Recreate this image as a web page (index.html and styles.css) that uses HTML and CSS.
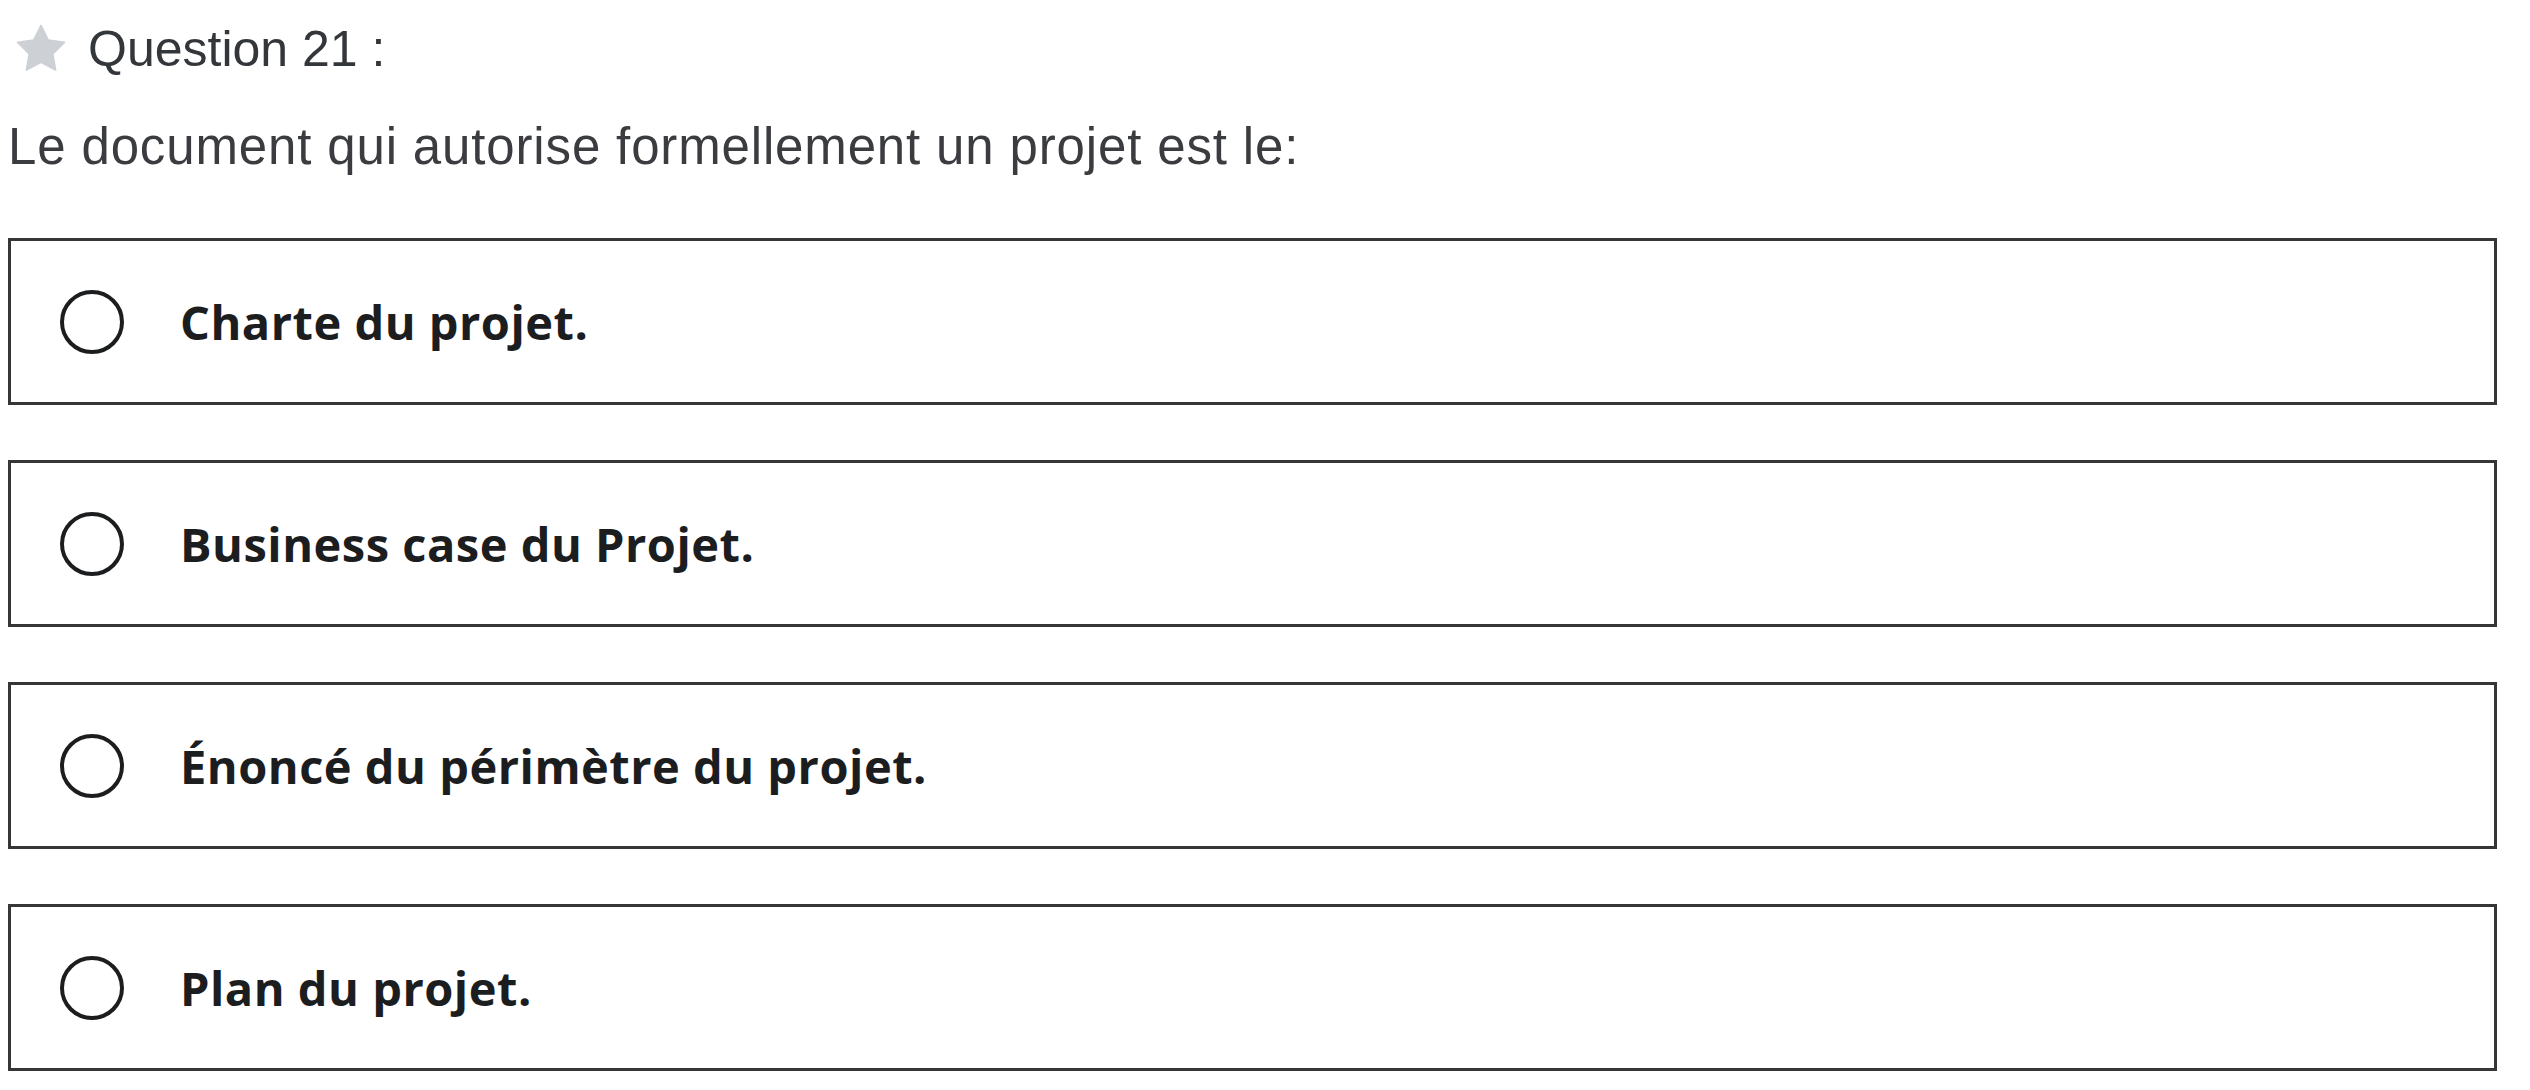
FILE: index.html
```html
<!DOCTYPE html>
<html lang="fr">
<head>
<meta charset="utf-8">
<title>Question 21</title>
<link rel="stylesheet" href="styles.css">
</head>
<body>
<div class="page">
  <div class="q-header">
    <svg class="star" viewBox="0 0 24 24" aria-hidden="true">
      <path d="M12 1.6l3.2 6.5 7.2 1-5.2 5.05 1.25 7.15L12 17.9l-6.45 3.4 1.25-7.15L1.6 9.1l7.2-1z"/>
    </svg>
    <span class="q-title">Question 21 :</span>
  </div>
  <p class="q-text">Le document qui autorise formellement un projet est le:</p>
  <div class="options">
    <label class="option"><span class="radio"></span><span class="opt-text">Charte du projet.</span></label>
    <label class="option"><span class="radio"></span><span class="opt-text">Business case du Projet.</span></label>
    <label class="option"><span class="radio"></span><span class="opt-text">Énoncé du périmètre du projet.</span></label>
    <label class="option"><span class="radio"></span><span class="opt-text">Plan du projet.</span></label>
  </div>
</div>
</body>
</html>
```
FILE: styles.css
```css
html, body {
  margin: 0;
  padding: 0;
  background: #ffffff;
}

.page {
  padding: 19px 33px 0 8px;
  font-family: "Liberation Sans", Arial, sans-serif;
  color: #2d2f31;
}

.q-header {
  display: flex;
  align-items: center;
  height: 60px;
}

.star {
  width: 54px;
  height: 54px;
  margin-left: 6px;
  fill: #cdd0d5;
  stroke: #cdd0d5;
  stroke-width: 0.8;
  stroke-linejoin: round;
  flex: none;
}

.q-title {
  margin-left: 20px;
  font-size: 50px;
  line-height: 60px;
  color: #33363a;
}

.q-text {
  margin: 38px 0 0 0;
  font-size: 51px;
  line-height: 60px;
  letter-spacing: 0.85px;
  color: #3a3c3f;
}

.options {
  margin-top: 61px;
  display: flex;
  flex-direction: column;
  gap: 55px;
}

.option {
  box-sizing: border-box;
  height: 167px;
  border: 3px solid #363636;
  display: flex;
  align-items: center;
  padding-left: 49px;
}

.radio {
  box-sizing: border-box;
  width: 64px;
  height: 64px;
  border: 4.5px solid #1c1d1f;
  border-radius: 50%;
  flex: none;
}

.opt-text {
  margin-left: 56px;
  font-family: "Open Sans", "Liberation Sans", sans-serif;
  font-weight: 700;
  font-size: 47px;
  line-height: 60px;
  letter-spacing: 0.5px;
  color: #1c1d1f;
}
```
